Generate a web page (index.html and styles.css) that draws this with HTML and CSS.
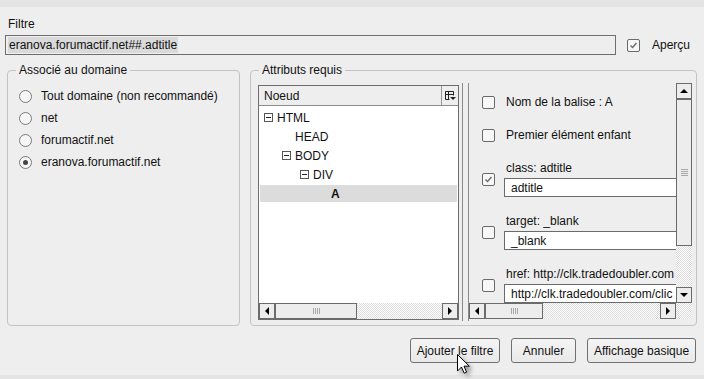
FILE: index.html
```html
<!DOCTYPE html>
<html lang="fr">
<head>
<meta charset="utf-8">
<title>Filtre</title>
<link rel="stylesheet" href="styles.css">
</head>
<body>
<div class="topband"></div>
<main class="dialog">
  <div class="filter-label">Filtre</div>
  <div class="filter-row">
    <div class="filter-input"><span class="sel">eranova.forumactif.net##.adtitle</span></div>
    <div class="apercu">
      <span class="cb checked"><svg viewBox="0 0 11 11" width="11" height="11"><path d="M2.5 5.5 L4.5 7.5 L8.5 3" fill="none" stroke="#6a6a6a" stroke-width="1.4"/></svg></span>
      <span class="apercu-text">Aperçu</span>
    </div>
  </div>

  <div class="groups">
    <fieldset class="group domain">
      <legend>Associé au domaine</legend>
      <div class="radios">
        <div class="radio"><span class="rb"></span>Tout domaine (non recommandé)</div>
        <div class="radio"><span class="rb"></span>net</div>
        <div class="radio"><span class="rb"></span>forumactif.net</div>
        <div class="radio"><span class="rb on"></span>eranova.forumactif.net</div>
      </div>
    </fieldset>

    <fieldset class="group attrs">
      <legend>Attributs requis</legend>
      <div class="attrs-body">
        <div class="tree">
          <div class="tree-head">
            <span class="th-label">Noeud</span>
            <span class="th-icon"><svg viewBox="0 0 11 10" width="11" height="10"><path d="M0.5 0.5 H8.5 V4.5 M0.5 0.5 V8.5 H4.5 M0.5 3.5 H8.5 M3.5 0.5 V8.5" fill="none" stroke="#222" stroke-width="1"/><path d="M5 6 H11 L8 9 Z" fill="#222"/></svg></span>
          </div>
          <div class="tree-rows">
            <div class="node l0"><span class="exp"></span>HTML</div>
            <div class="node l1 leaf">HEAD</div>
            <div class="node l1"><span class="exp"></span>BODY</div>
            <div class="node l2"><span class="exp"></span>DIV</div>
            <div class="node l3 leaf sel-row"><b>A</b></div>
          </div>
          <div class="hscroll">
            <span class="sb-btn"><span class="tri left"></span></span>
            <span class="sb-thumb h tree-thumb"><span class="grip-v"></span></span>
            <span class="sb-track"></span>
            <span class="sb-btn"><span class="tri right"></span></span>
          </div>
        </div>

        <div class="splitter"></div>

        <div class="props">
          <div class="props-list">
            <div class="prop simple first">
              <span class="cb"></span>
              <span class="prop-text">Nom de la balise : A</span>
            </div>
            <div class="prop simple">
              <span class="cb"></span>
              <span class="prop-text">Premier élément enfant</span>
            </div>
            <div class="prop field">
              <span class="cb checked"><svg viewBox="0 0 11 11" width="11" height="11"><path d="M2.5 5.5 L4.5 7.5 L8.5 3" fill="none" stroke="#6a6a6a" stroke-width="1.4"/></svg></span>
              <div class="prop-body">
                <div class="prop-text">class: adtitle</div>
                <div class="prop-input">adtitle</div>
              </div>
            </div>
            <div class="prop field">
              <span class="cb"></span>
              <div class="prop-body">
                <div class="prop-text">target: _blank</div>
                <div class="prop-input">_blank</div>
              </div>
            </div>
            <div class="prop field">
              <span class="cb"></span>
              <div class="prop-body">
                <div class="prop-text">href: http://clk.tradedoubler.com</div>
                <div class="prop-input">http://clk.tradedoubler.com/clic</div>
              </div>
            </div>
          </div>
          <div class="vscroll">
            <span class="sb-btn"><span class="tri up"></span></span>
            <span class="sb-thumb v"><span class="grip-h"></span></span>
            <span class="sb-track"></span>
            <span class="sb-btn"><span class="tri down"></span></span>
          </div>
          <div class="hscroll props-h">
            <span class="sb-btn"><span class="tri left"></span></span>
            <span class="sb-thumb h props-thumb"><span class="grip-v"></span></span>
            <span class="sb-track"></span>
            <span class="sb-btn"><span class="tri right"></span></span>
          </div>
          <div class="corner"></div>
        </div>
      </div>
    </fieldset>
  </div>

  <div class="buttons">
    <button class="btn btn-add" type="button">Ajouter le filtre</button>
    <button class="btn btn-cancel" type="button">Annuler</button>
    <button class="btn btn-basic" type="button">Affichage basique</button>
  </div>
</main>
<div class="bottomband"></div>

<svg class="cursor" viewBox="0 0 16 24" width="16" height="24"><path d="M0.5 0.5 V17 L4.5 13 L7.2 19.2 L9.6 18.2 L7 12.2 H12.3 Z" fill="#fff" stroke="#000" stroke-width="1" stroke-linejoin="miter"/></svg>
</body>
</html>
```
FILE: styles.css
```css
* { box-sizing: border-box; }
html, body { margin: 0; padding: 0; }
body {
  width: 704px;
  height: 379px;
  overflow: hidden;
  position: relative;
  background: #eeeeee;
  font-family: "Liberation Sans", Arial, sans-serif;
  font-size: 12px;
  color: #111;
}
.topband { height: 7px; background: #e4e4e4; }
.bottomband { position: absolute; left: 0; right: 0; bottom: 0; height: 4px; background: #e4e4e4; }

.dialog { padding: 0 7px 0 5px; }

.filter-label { margin: 10px 0 0 3px; height: 14px; line-height: 14px; }

.filter-row { display: flex; align-items: center; margin-top: 4px; height: 20px; }
.filter-input {
  width: 611px; height: 20px;
  border: 1px solid #6e6e6e;
  padding: 2px 0 0 2px;
  line-height: 14px;
  white-space: nowrap;
}
.sel { background: #dadada; padding: 1px 1px; }

.apercu { display: flex; align-items: center; margin-left: 11px; }
.apercu-text { margin-left: 12px; }

.cb {
  flex: none;
  width: 13px; height: 13px;
  border: 1px solid #6a6a6a;
  border-radius: 2px;
  background: #f7f7f7;
  display: inline-flex; align-items: center; justify-content: center;
}
.cb svg { display: block; }

.groups { display: flex; margin-top: 8px; margin-left: 2px; gap: 10px; }
.group {
  margin: 0; padding: 0; min-width: 0;
  height: 263px;
  border: 1px solid #c3c3c3;
  border-radius: 4px;
}
.group legend {
  margin-left: 8px;
  padding: 0 3px;
  line-height: 14px;
}
.domain { width: 233px; }
.attrs { width: 447px; }

.radios { padding: 8px 0 0 11px; }
.radio { display: flex; align-items: center; height: 22px; }
.rb {
  width: 13px; height: 13px;
  border: 1px solid #7a7a7a;
  border-radius: 50%;
  background: #f6f6f6;
  margin-right: 9px;
  display: inline-flex; align-items: center; justify-content: center;
}
.rb.on::after { content: ""; width: 5px; height: 5px; border-radius: 50%; background: #444; }

.attrs-body { display: flex; padding-left: 7px; margin-top: 6px; height: 238px; }

.tree {
  width: 201px; height: 235px;
  margin-top: 2px;
  border: 1px solid #6d6d6d;
  background: #fff;
  display: flex; flex-direction: column;
}
.tree-head {
  height: 20px; flex: none;
  background: #eeeeee;
  border-bottom: 1px solid #8c8c8c;
  display: flex; align-items: center;
}
.th-label { flex: 1; padding-left: 5px; }
.th-icon {
  width: 17px; height: 19px;
  border-left: 1px solid #9a9a9a;
  display: flex; align-items: center; justify-content: center;
}
.tree-rows { flex: 1; padding-top: 2px; }
.node { height: 19px; display: flex; align-items: center; white-space: nowrap; }
.node.l0 { padding-left: 5px; }
.node.l1 { padding-left: 23px; }
.node.l2 { padding-left: 41px; }
.node.l3 { padding-left: 59px; }
.node.l1.leaf { padding-left: 36px; }
.node.l3.leaf { padding-left: 72px; }
.sel-row { background: #dcdcdc; margin: 1px 1px 0; padding-left: 71px !important; height: 17px; }
.exp {
  width: 9px; height: 9px;
  border: 1px solid #555;
  margin-right: 4px;
  display: inline-flex; align-items: center; justify-content: center;
}
.exp::after { content: ""; width: 5px; height: 1px; background: #222; }

.hscroll { display: flex; height: 16px; flex: none; }
.vscroll { display: flex; flex-direction: column; width: 16px; }
.sb-btn {
  flex: none;
  width: 16px; height: 16px;
  border: 1px solid #6b6b6b;
  background: #ededed;
  display: flex; align-items: center; justify-content: center;
}
.sb-thumb {
  flex: none;
  border: 1px solid #6b6b6b;
  background: #ededed;
  display: flex; align-items: center; justify-content: center;
}
.sb-thumb.h { height: 16px; }
.tree-thumb { width: 82px; }
.props-thumb { width: 58px; }
.sb-thumb.v { width: 16px; height: 147px; }
.sb-track {
  flex: 1;
  background: repeating-conic-gradient(#ffffff 0 25%, #dcdcdc 0 50%) 0 0 / 2px 2px;
}
.grip-v {
  width: 7px; height: 6px;
  background: repeating-linear-gradient(90deg, #a8a8a8 0 1px, transparent 1px 2px);
}
.grip-h {
  width: 7px; height: 7px;
  background: repeating-linear-gradient(180deg, #a8a8a8 0 1px, transparent 1px 2px);
}
.tri { width: 0; height: 0; border: 4px solid transparent; }
.tri.left { border-right-color: #000; border-left-width: 0; }
.tri.right { border-left-color: #000; border-right-width: 0; }
.tri.up { border-bottom-color: #000; border-top-width: 0; }
.tri.down { border-top-color: #000; border-bottom-width: 0; }

.splitter {
  width: 10px; height: 238px;
  border-right: 1px solid #8a8a8a;
  position: relative;
}
.splitter::before {
  content: ""; position: absolute; left: 3px; top: 0; bottom: 0;
  border-left: 1px solid #8a8a8a;
}

.props {
  width: 223px; height: 236px;
  display: grid;
  grid-template-columns: 207px 16px;
  grid-template-rows: 220px 16px;
}
.props-list { overflow: hidden; padding: 12px 0 0 13px; }
.prop { display: flex; align-items: center; }
.prop .cb { margin-right: 11px; }
.prop.simple { height: 14px; margin-bottom: 19px; }
.prop.field { height: 36px; margin-bottom: 17px; }
.prop-body { display: flex; flex-direction: column; }
.prop-text { line-height: 14px; height: 14px; white-space: nowrap; }
.prop-input {
  margin-top: 3px;
  width: 190px; height: 19px;
  border: 1px solid #6b6b6b;
  background: #fff;
  padding: 2px 0 0 6px;
  line-height: 14px;
  white-space: nowrap; overflow: hidden;
  margin-left: -2px;
}
.props-h { grid-column: 1; grid-row: 2; }
.corner {
  background: repeating-conic-gradient(#ffffff 0 25%, #dcdcdc 0 50%) 0 0 / 2px 2px;
}

.buttons { display: flex; justify-content: flex-end; gap: 11px; margin-top: 12px; padding-right: 1px; }
.btn {
  height: 25px;
  font: inherit; color: #111;
  border: 1px solid #707070;
  border-radius: 3px;
  background: linear-gradient(#f4f4f4, #e9e9e9);
  padding: 0;
}
.btn-add { width: 90px; }
.btn-cancel { width: 65px; }
.btn-basic { width: 109px; }

.cursor {
  position: absolute; left: 457px; top: 354px;
  filter: drop-shadow(3px 3px 2px rgba(0,0,0,0.35));
}
```
